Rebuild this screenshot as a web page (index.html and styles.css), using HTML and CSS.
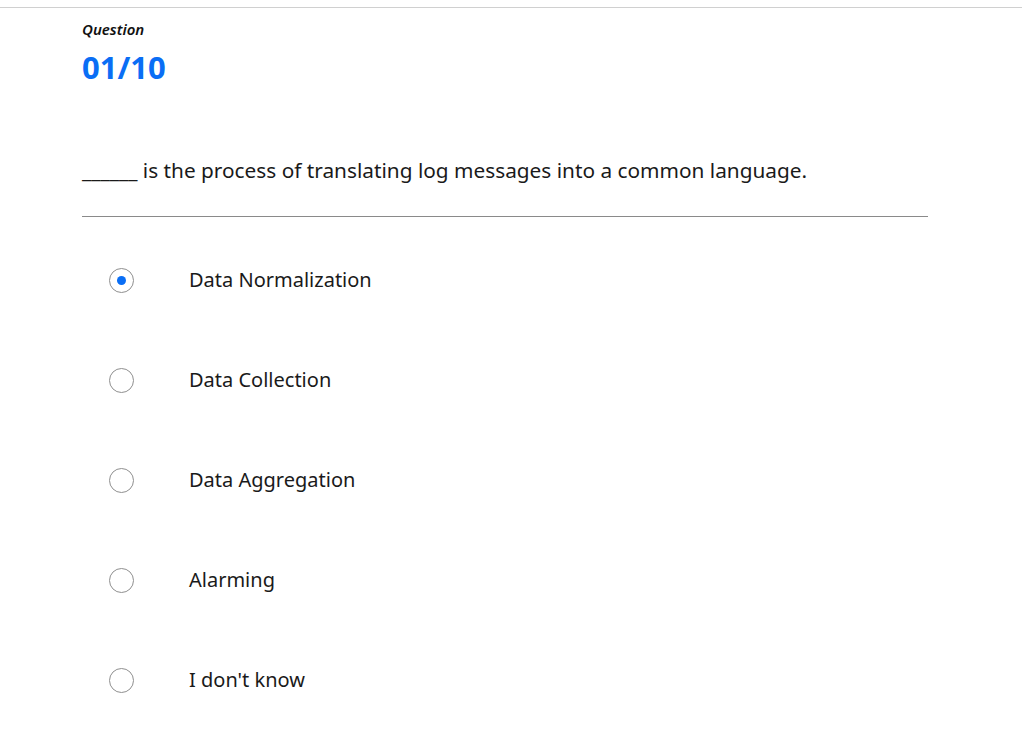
FILE: index.html
```html
<!DOCTYPE html>
<html>
<head>
<meta charset="utf-8">
<link rel="stylesheet" href="styles.css">
</head>
<body>
<div class="topline"></div>
<main class="quiz">
  <div class="label">Question</div>
  <div class="counter">01/10</div>
  <p class="question">______ is the process of translating log messages into a common language.</p>
  <hr class="divider">
  <ul class="options">
    <li class="option"><span class="radio checked"></span><span class="text">Data Normalization</span></li>
    <li class="option"><span class="radio"></span><span class="text">Data Collection</span></li>
    <li class="option"><span class="radio"></span><span class="text">Data Aggregation</span></li>
    <li class="option"><span class="radio"></span><span class="text">Alarming</span></li>
    <li class="option"><span class="radio"></span><span class="text">I don't know</span></li>
  </ul>
</main>
</body>
</html>
```
FILE: styles.css
```css
html, body { margin: 0; padding: 0; background: #fff; }
body { font-family: "Noto Sans", "Open Sans", sans-serif; color: #1a1a1a; }
.topline { height: 7px; border-bottom: 1px solid #d0d0d0; }
.quiz { width: 846px; margin-left: 82px; padding-top: 11px; }
.label { font-style: italic; font-weight: 600; font-size: 15px; line-height: 20px; color: #111; }
.counter { margin-top: 9px; font-weight: 700; font-size: 31px; line-height: 38px; color: #0a6ef5; }
.question { margin: 70px 0 0; font-size: 20.8px; line-height: 28px; color: #1a1a1a; }
.divider { margin: 32px 0 0; border: 0; border-top: 1px solid #8a8a8a; height: 0; }
.options { list-style: none; margin: 0; padding: 0; padding-top: 50px; }
.option { display: flex; align-items: center; height: 26px; margin-bottom: 74px; }
.radio { box-sizing: border-box; width: 25px; height: 25px; border: 1px solid #8f8f8f; border-radius: 50%; margin-left: 27px; display: flex; align-items: center; justify-content: center; }
.radio.checked::after { content: ""; width: 9px; height: 9px; border-radius: 50%; background: #0a6ef5; }
.text { margin-left: 55px; font-size: 20px; line-height: 26px; }
```
